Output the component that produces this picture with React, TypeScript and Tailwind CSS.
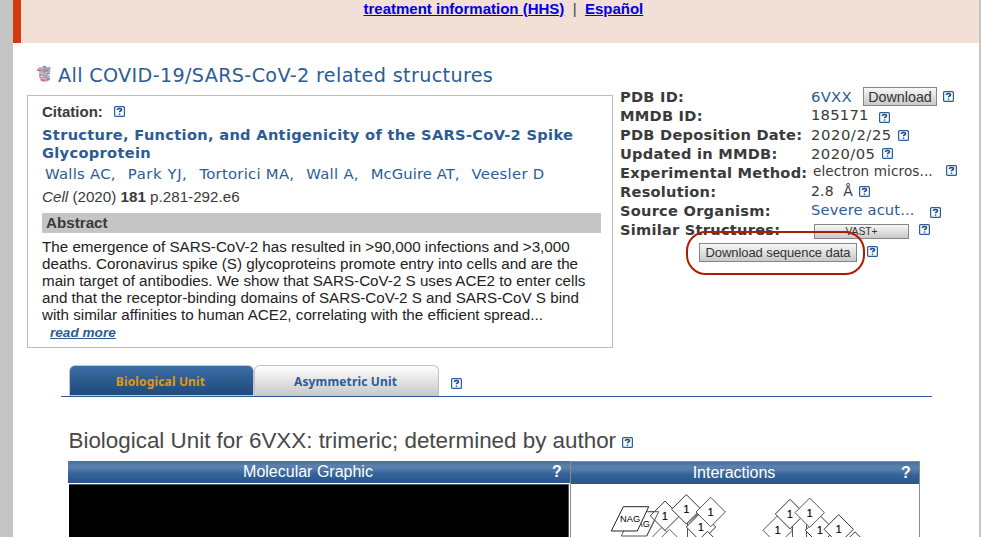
import React from "react";

const verdana = "font-['DejaVu_Sans',sans-serif]";

function Help({ className = "" }: { className?: string }) {
  return (
    <svg width="11" height="11" viewBox="0 0 11 11" className={`block shrink-0 ${className}`}>
      <rect x="0.6" y="0.6" width="9.8" height="9.8" rx="1" fill="#f7fbfe" stroke="#2c5d94" strokeWidth="1.2" />
      <path d="M3.5 4V3.3q.5-.9 2-.9 2 0 2 1.3 0 .8-1.1 1.3-.9.4-.9 1.3M5.5 7.4v1.4" fill="none" stroke="#1f4e86" strokeWidth="1.5" />
    </svg>
  );
}

function Protein() {
  return (
    <svg width="16" height="18" viewBox="0 0 16 18" className="mt-[2px] block shrink-0">
      <path d="M3 3l5-2 6 2 .5 4-2 2 1.500 3v3l-4 2-5-1.500 1-4-3-3z" fill="#bdb8c0" />
      <path d="M5 4l7-1 1.5 3-6 2z" fill="#9b989c" />
      <path d="M6 9l5 1 1 4-4-1z" fill="#a7a2aa" />
      <path d="M1 5l4 .5M3.5 12l2 1M4.5 14.5l4 1.5" stroke="#dc5a68" strokeWidth="1.6" />
      <path d="M2 3.5l3-.5M6 10l3 2" stroke="#e79aa4" strokeWidth="1.3" />
      <path d="M7 1.3l3 .7M12.5 2.5l2 .8M11 9l3-1M3 10.5l2-.5M10 15.5l4-2" stroke="#7a77de" strokeWidth="1.3" />
    </svg>
  );
}

function Row({ label, children }: { label: string; children: React.ReactNode }) {
  return (
    <div className="flex h-[19px] items-start">
      <div className="w-[191px] shrink-0 whitespace-nowrap text-[14.6px] leading-[19px] font-bold tracking-[0.25px]">{label}</div>
      {children}
    </div>
  );
}

const button =
  "block shrink-0 whitespace-nowrap border border-[#868686] bg-linear-to-b from-[#f7f7f7] to-[#c9c9c9] text-center text-[#333] font-['Liberation_Sans',Arial,sans-serif]";

function Diamond({ x, y, c = "#333", t = true }: { x: number; y: number; c?: string; t?: boolean }) {
  return (
    <g>
      <path d={`M${x} ${y - 14.7}l14.7 14.7l-14.7 14.7l-14.7 -14.7z`} fill="#fff" stroke={c} />
      {t && (
        <text x={x} y={y + 4} textAnchor="middle" fontSize="10.5" fill="#000" stroke="#000" strokeWidth="0.2">
          1
        </text>
      )}
    </g>
  );
}

function Interactions() {
  return (
    <svg width="348" height="53" viewBox="571 484 348 53" className="block font-['Liberation_Sans',Arial,sans-serif]">
      <path d="M687.5 522v20M686 523l11-10M687 524l11-10M792.5 520v20M806.5 520v20" stroke="#555" fill="none" />
      <Diamond x={662} y={542} c="#666" t={false} />
      <Diamond x={669.5} y={544} c="#666" t={false} />
      <path d="M621.3 536l11.4-24.3h26l-12 24.3z" fill="#fff" stroke="#555" />
      <text x="636.5" y="527.2" fontSize="9.2">
        AG
      </text>
      <Diamond x={665} y={515.8} />
      <path d="M646.7 536l12-24.3h-10" fill="none" stroke="#555" />
      <Diamond x={686.3} y={509.3} />
      <path d="M688 522.5l9-9" stroke="#888" strokeWidth="1.6" />
      <Diamond x={701} y={527} />
      <Diamond x={710.7} y={512} c="#555" />
      <Diamond x={707.5} y={546} t={false} />
      <path d="M611.3 531l12-24.3h25.4l-11.4 24.3z" fill="#fff" stroke="#222" />
      <text x="620" y="522" fontSize="9.3">
        NAG
      </text>
      <Diamond x={777.7} y={530.3} c="#555" />
      <Diamond x={790} y={514} />
      <Diamond x={820} y={530.3} />
      <Diamond x={809.7} y={512.7} c="#555" />
      <Diamond x={855} y={546.5} t={false} />
      <Diamond x={838.7} y={529.3} />
    </svg>
  );
}

const barFill = "bg-[linear-gradient(to_bottom,#456f9f_0%,#5a80ab_20%,#557ca8_35%,#33629a_60%,#285689_100%)]";

export default function App() {
  return (
    <div className="flex h-[537px] w-[981px] overflow-hidden bg-white font-['Liberation_Sans',Arial,sans-serif] text-[#3a3a3a]">
      <div className="w-[13px] shrink-0 bg-[#c5c5c5]" />
      <main className="w-[966px] shrink-0 overflow-hidden">
        <div className="h-[43px] border-l-8 border-[#d13b0f] bg-[#f2dfd6] pl-[342.5px]">
          <div className="h-[18px] whitespace-pre text-[15px] leading-[18px] font-bold text-[#0000e6]">
            <a className="underline">treatment information (HHS)</a>
            <span className="font-normal text-[#444]">{"  |  "}</span>
            <a className="underline">Español</a>
          </div>
        </div>

        <div className={`flex h-[52px] pl-[23px] pt-[20px] text-[#2c5c93] ${verdana}`}>
          <Protein />
          <h1 className="mt-px ml-[6px] whitespace-nowrap text-[19.2px] leading-[24px] tracking-[0.34px]">
            All COVID-19/SARS-CoV-2 related structures
          </h1>
        </div>

        <div className="flex h-[270px]">
          <section className="ml-[14px] h-[253px] w-[586px] shrink-0 border border-[#bdbdbd] pl-[14px]">
            <div className="flex h-[30px] items-center pt-[2px]">
              <span className="w-[72px] text-[15px] leading-[18px] font-bold">Citation:</span>
              <Help className="mt-[-1px]" />
            </div>
            <h2 className={`whitespace-nowrap text-[14.6px] leading-[18px] font-bold tracking-[0.32px] text-[#2c5c93] ${verdana}`}>
              Structure, Function, and Antigenicity of the SARS-CoV-2 Spike
              <br />
              Glycoprotein
            </h2>
            <div className={`ml-[3px] flex h-[24px] gap-[12px] whitespace-nowrap text-[14.8px] leading-[24px] tracking-[0.28px] text-[#2c5c93] ${verdana}`}>
              <span>Walls AC,</span>
              <span className="tracking-[0.6px]">Park YJ,</span>
              <span>Tortorici MA,</span>
              <span>Wall A,</span>
              <span className="tracking-[0.06px]">McGuire AT,</span>
              <span>Veesler D</span>
            </div>
            <div className="h-[27px] pt-[1px] text-[15.2px] leading-[20px]">
              <i>Cell</i> (2020) <b>181</b> p.281-292.e6
            </div>
            <div className="h-[20px] w-[559px] bg-[#c5c5c5] pl-[4px] text-[15.2px] leading-[20px] font-bold">Abstract</div>
            <p className="mt-[5px] text-[15.2px] leading-[17px] whitespace-nowrap text-[#222]">
              The emergence of SARS-CoV-2 has resulted in &gt;90,000 infections and &gt;3,000
              <br />
              deaths. Coronavirus spike (S) glycoproteins promote entry into cells and are the
              <br />
              main target of antibodies. We show that SARS-CoV-2 S uses ACE2 to enter cells
              <br />
              and that the receptor-binding domains of SARS-CoV-2 S and SARS-CoV S bind
              <br />
              with similar affinities to human ACE2, correlating with the efficient spread...
            </p>
            <a className="mt-px ml-[8px] block text-[13.6px] leading-[18px] font-bold text-[#2c5c93] italic underline">read more</a>
          </section>

          <section className={`relative ml-[7px] mt-[-8px] w-[340px] ${verdana}`}>
            <Row label="PDB ID:">
              <span className="w-[52px] text-[14.9px] leading-[20px] tracking-[0.2px] text-[#2c5c93]">6VXX</span>
              <button className={`${button} h-[19px] w-[74px] text-[14.3px] leading-[18px]`}>Download</button>
              <Help className="mt-[4px] ml-[6px]" />
            </Row>
            <Row label="MMDB ID:">
              <span className="w-[68px] text-[14.8px] leading-[18px] tracking-[0.2px]">185171</span>
              <Help className="mt-[6px]" />
            </Row>
            <Row label="PDB Deposition Date:">
              <span className="w-[87px] text-[14.8px] leading-[20px] tracking-[0.55px]">2020/2/25</span>
              <Help className="mt-[5px]" />
            </Row>
            <Row label="Updated in MMDB:">
              <span className="w-[71px] text-[14.8px] leading-[19px] tracking-[0.42px]">2020/05</span>
              <Help className="mt-[4px]" />
            </Row>
            <Row label="Experimental Method:">
              <span className="ml-[2px] w-[133px] whitespace-nowrap text-[13.6px] leading-[16px] tracking-[0.1px]">electron micros...</span>
              <Help className="mt-[2px]" />
            </Row>
            <Row label="Resolution:">
              <span className="w-[48px] text-[14px] leading-[19px] tracking-[0.2px] whitespace-pre">{"2.8  Å"}</span>
              <Help className="mt-[4px]" />
            </Row>
            <Row label="Source Organism:">
              <span className="w-[119px] whitespace-nowrap text-[14.7px] leading-[17px] tracking-[0.14px] text-[#2c5c93]">Severe acut...</span>
              <Help className="mt-[6px]" />
            </Row>
            <Row label="Similar Structures:">
              <button className={`${button} mt-[4px] ml-[3px] h-[15px] w-[95px] text-[10.3px] leading-[13px]`}>VAST+</button>
              <Help className="mt-[4px] ml-[10px]" />
            </Row>
            <div className="mt-[4px] ml-[79px] flex">
              <button className={`${button} h-[19px] w-[158px] text-[13px] leading-[18px] tracking-[-0.08px]`}>Download sequence data</button>
              <Help className="mt-[3px] ml-[10px]" />
            </div>
            <div className="absolute top-[144px] left-[66px] h-[44px] w-[179px] rounded-[20px] border-2 border-[#ad1c03]" />
          </section>
        </div>

        <nav className="ml-[48px] flex h-[32px] w-[871px] border-b border-[#2c5c93] pl-[8px] text-center font-['Noto_Sans',sans-serif] text-[12px] leading-[31px] font-bold tracking-[0.15px]">
          <div className="h-[31px] w-[185px] rounded-t-[6px] border border-[#c2c7cd] bg-linear-to-b from-[#3b6da5] to-[#21497a] pr-[2px] text-[#e09a0c]">
            Biological Unit
          </div>
          <div className="h-[31px] w-[185px] rounded-t-[6px] border border-b-0 border-[#c2c2c2] bg-linear-to-b from-white to-[#c8c8c8] pr-[2px] text-[#2c5c93]">
            Asymmetric Unit
          </div>
          <Help className="mt-[13px] ml-[12px]" />
        </nav>

        <div className="ml-[55px] flex h-[64px]">
          <h2 className="mt-[30px] h-[28px] w-[548px] whitespace-nowrap pl-[0.5px] text-[22.4px] leading-[28px] text-[#484848]">
            Biological Unit for 6VXX: trimeric; determined by author
          </h2>
          <Help className="mt-[40px] ml-[6px]" />
        </div>

        <div className="ml-[55px] flex h-[76px] text-[16px] text-white">
          <section className="w-[502px]">
            <header className={`flex h-[22px] items-center ${barFill}`}>
              <span className="w-[480px] whitespace-nowrap text-center leading-[20px]">Molecular Graphic</span>
              <b className="ml-[4px]">?</b>
            </header>
            <div className="mt-[1px] ml-[1px] h-[53px] w-[500px] border-t border-r border-[#555] bg-black" />
          </section>
          <section className="w-[350px] border-x border-t border-[#8a8a8a]">
            <header className={`flex h-[22px] items-center ${barFill}`}>
              <span className="w-[326px] text-center leading-[20px]">Interactions</span>
              <b className="ml-[4px]">?</b>
            </header>
            <Interactions />
          </section>
        </div>
      </main>
      <div className="w-[2px] shrink-0 bg-[#c5c5c5]" />
    </div>
  );
}
